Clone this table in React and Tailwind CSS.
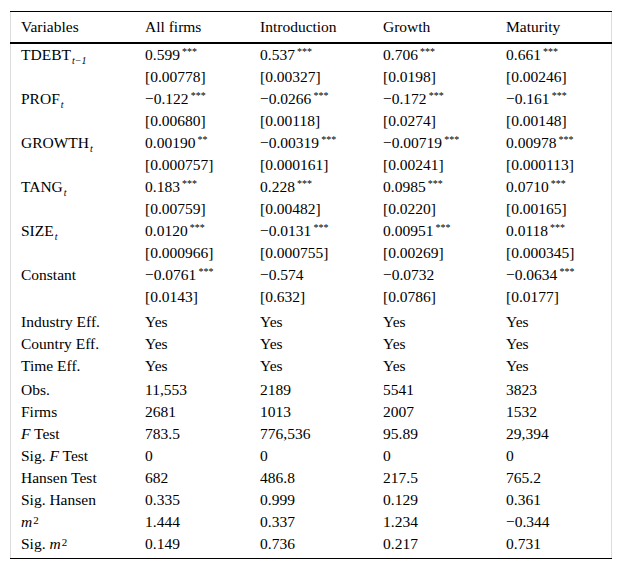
import React from "react";

const S = ({ s }) => (
  <sup className="relative top-[-5px] ml-[2px] text-[10px] leading-none">{s}</sup>
);
const Sub = ({ t }) => (
  <sub className="relative top-[4px] ml-[1px] text-[10px] italic leading-none">{t}</sub>
);
const Sq = () => (
  <sup className="relative top-[-3px] ml-px text-[11px] leading-none">2</sup>
);

const V = (v) => {
  const m = v.match(/^(.*?)(\*+)$/);
  if (m) return <span>{m[1]}<S s={m[2]} /></span>;
  return <span>{v}</span>;
};

const rows = [
  { label: <span>TDEBT<Sub t="t−1" /></span>, vals: ["0.599***", "0.537***", "0.706***", "0.661***"] },
  { label: "", vals: ["[0.00778]", "[0.00327]", "[0.0198]", "[0.00246]"] },
  { label: <span>PROF<Sub t="t" /></span>, vals: ["−0.122***", "−0.0266***", "−0.172***", "−0.161***"] },
  { label: "", vals: ["[0.00680]", "[0.00118]", "[0.0274]", "[0.00148]"] },
  { label: <span>GROWTH<Sub t="t" /></span>, vals: ["0.00190**", "−0.00319***", "−0.00719***", "0.00978***"] },
  { label: "", vals: ["[0.000757]", "[0.000161]", "[0.00241]", "[0.000113]"] },
  { label: <span>TANG<Sub t="t" /></span>, vals: ["0.183***", "0.228***", "0.0985***", "0.0710***"] },
  { label: "", vals: ["[0.00759]", "[0.00482]", "[0.0220]", "[0.00165]"] },
  { label: <span>SIZE<Sub t="t" /></span>, vals: ["0.0120***", "−0.0131***", "0.00951***", "0.0118***"] },
  { label: "", vals: ["[0.000966]", "[0.000755]", "[0.00269]", "[0.000345]"] },
  { label: "Constant", vals: ["−0.0761***", "−0.574", "−0.0732", "−0.0634***"] },
  { label: "", vals: ["[0.0143]", "[0.632]", "[0.0786]", "[0.0177]"] },
  { label: "Industry Eff.", vals: ["Yes", "Yes", "Yes", "Yes"], gap: "mt-[3px]" },
  { label: "Country Eff.", vals: ["Yes", "Yes", "Yes", "Yes"] },
  { label: "Time Eff.", vals: ["Yes", "Yes", "Yes", "Yes"] },
  { label: "Obs.", vals: ["11,553", "2189", "5541", "3823"], gap: "mt-[2px]" },
  { label: "Firms", vals: ["2681", "1013", "2007", "1532"] },
  { label: <span><i>F</i> Test</span>, vals: ["783.5", "776,536", "95.89", "29,394"] },
  { label: <span>Sig. <i>F</i> Test</span>, vals: ["0", "0", "0", "0"] },
  { label: "Hansen Test", vals: ["682", "486.8", "217.5", "765.2"] },
  { label: "Sig. Hansen", vals: ["0.335", "0.999", "0.129", "0.361"] },
  { label: <span><i>m</i><Sq /></span>, vals: ["1.444", "0.337", "1.234", "−0.344"] },
  { label: <span>Sig. <i>m</i><Sq /></span>, vals: ["0.149", "0.736", "0.217", "0.731"] },
];

const cols = "grid grid-cols-[124px_115px_123px_123px_115px]";

export default function App() {
  return (
    <div className="bg-white min-h-[571px] pl-[10px] pt-[11px] text-black" style={{ fontFamily: '"Liberation Serif", "Times New Roman", serif' }}>
      <div className="w-[602px] border-y border-black">
        <div className="border-x border-[#dcdcdc]">
          <div className="-mx-px border-b-2 border-black px-px">
            <div className={`${cols} h-[30px] items-center text-[15.5px]`}>
              {["Variables", "All firms", "Introduction", "Growth", "Maturity"].map((h) => (
                <div key={h} className="pl-[10px]">{h}</div>
              ))}
            </div>
          </div>
          <div className="pb-[3px]">
            {rows.map((r, i) => (
              <div key={i} className={`${cols} h-[22px] items-center text-[15.5px] leading-none ${r.gap || ""}`}>
                <div className="pl-[10px] whitespace-nowrap">{r.label}</div>
                {r.vals.map((v, j) => (
                  <div key={j} className="pl-[10px] whitespace-nowrap">{V(v)}</div>
                ))}
              </div>
            ))}
          </div>
        </div>
      </div>
    </div>
  );
}
